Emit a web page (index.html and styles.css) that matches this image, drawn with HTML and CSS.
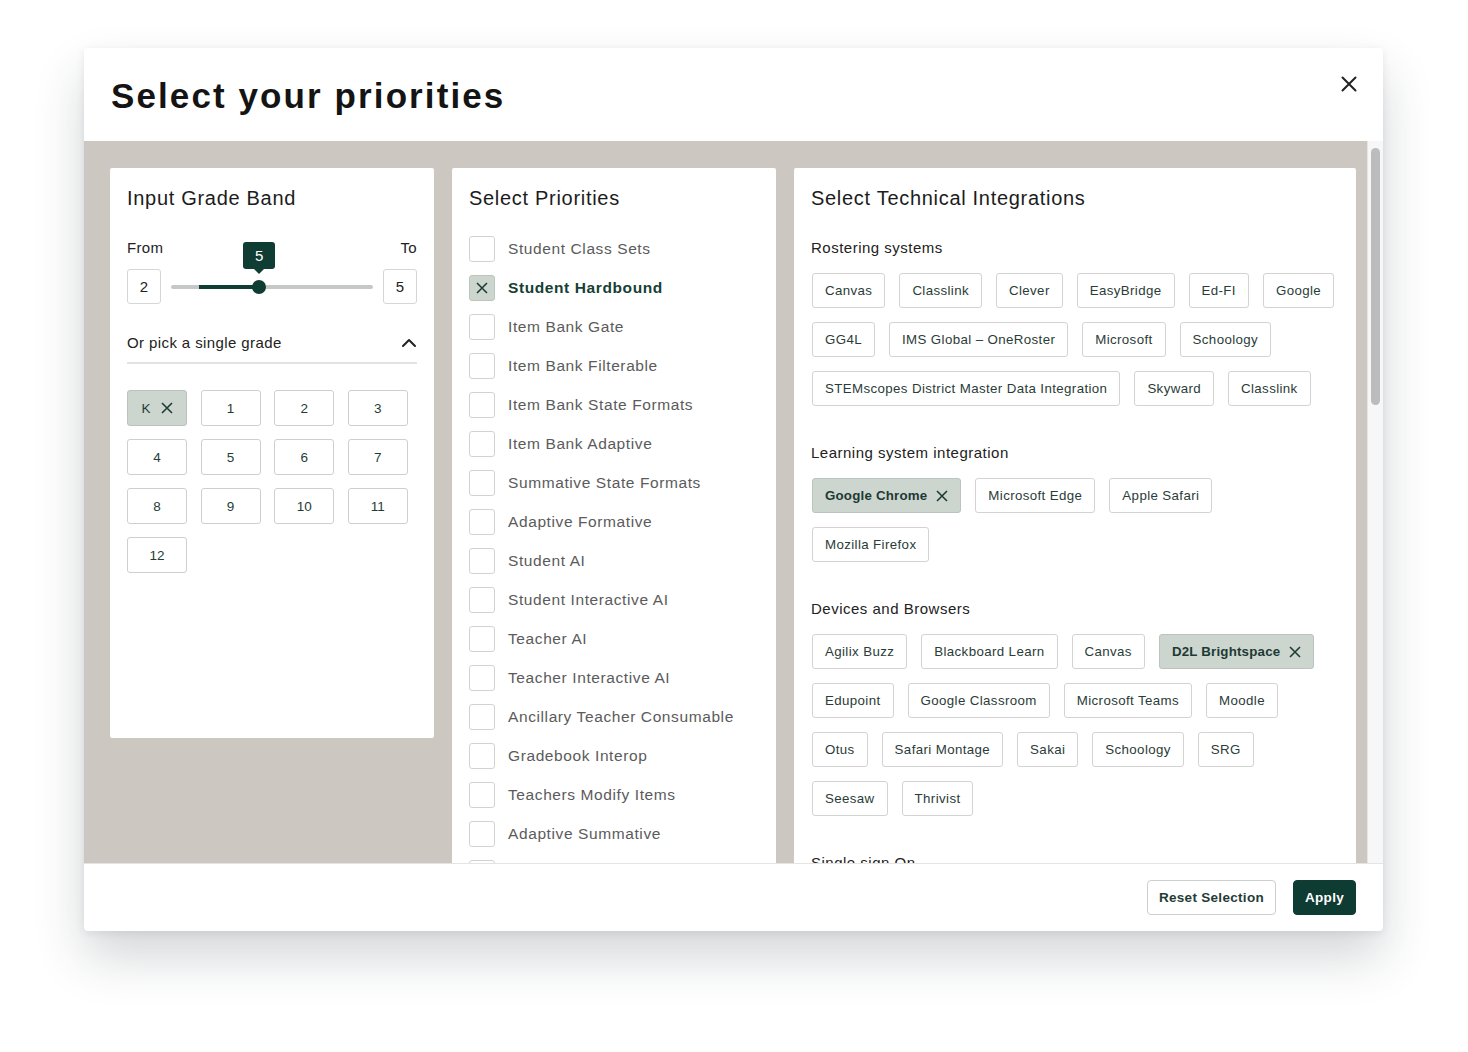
FILE: index.html
```html
<!DOCTYPE html>
<html lang="en">
<head>
<meta charset="utf-8">
<title>Select your priorities</title>
<link rel="stylesheet" href="styles.css">
</head>
<body>
<div class="modal">
  <header class="modal-header">
    <h1 class="title">Select your priorities</h1>
    <button class="close" aria-label="Close">
      <svg width="16" height="16" viewBox="0 0 16 16"><path d="M1.5 1.5 L14.5 14.5 M14.5 1.5 L1.5 14.5" stroke="#222" stroke-width="2" fill="none" stroke-linecap="round"/></svg>
    </button>
  </header>

  <div class="modal-body">
    <div class="panels">
      <section class="panel panel-grade">
        <h2 class="panel-title">Input Grade Band</h2>
        <div class="range-labels"><span>From</span><span>To</span></div>
        <div class="range-row">
          <div class="num-box">2</div>
          <div class="track">
            <div class="track-fill"></div>
            <div class="thumb"></div>
            <div class="bubble">5</div>
          </div>
          <div class="num-box">5</div>
        </div>
        <div class="single-head">
          <span>Or pick a single grade</span>
          <svg width="16" height="10" viewBox="0 0 16 10"><path d="M2 8 L8 2 L14 8" stroke="#222" stroke-width="2" fill="none" stroke-linecap="round" stroke-linejoin="round"/></svg>
        </div>
        <div class="grade-grid">
          <button class="grade selected">K <svg width="12" height="12" viewBox="0 0 12 12"><path d="M1 1 L11 11 M11 1 L1 11" stroke="#1f3d36" stroke-width="1.6" fill="none"/></svg></button>
          <button class="grade">1</button>
          <button class="grade">2</button>
          <button class="grade">3</button>
          <button class="grade">4</button>
          <button class="grade">5</button>
          <button class="grade">6</button>
          <button class="grade">7</button>
          <button class="grade">8</button>
          <button class="grade">9</button>
          <button class="grade">10</button>
          <button class="grade">11</button>
          <button class="grade">12</button>
        </div>
      </section>

      <section class="panel panel-prio">
        <h2 class="panel-title">Select Priorities</h2>
        <ul class="checklist">
          <li><span class="box"></span>Student Class Sets</li>
          <li class="checked"><span class="box"><svg width="12" height="12" viewBox="0 0 12 12"><path d="M1 1 L11 11 M11 1 L1 11" stroke="#1f3d36" stroke-width="1.6" fill="none"/></svg></span>Student Hardbound</li>
          <li><span class="box"></span>Item Bank Gate</li>
          <li><span class="box"></span>Item Bank Filterable</li>
          <li><span class="box"></span>Item Bank State Formats</li>
          <li><span class="box"></span>Item Bank Adaptive</li>
          <li><span class="box"></span>Summative State Formats</li>
          <li><span class="box"></span>Adaptive Formative</li>
          <li><span class="box"></span>Student AI</li>
          <li><span class="box"></span>Student Interactive AI</li>
          <li><span class="box"></span>Teacher AI</li>
          <li><span class="box"></span>Teacher Interactive AI</li>
          <li><span class="box"></span>Ancillary Teacher Consumable</li>
          <li><span class="box"></span>Gradebook Interop</li>
          <li><span class="box"></span>Teachers Modify Items</li>
          <li><span class="box"></span>Adaptive Summative</li>
          <li class="partial"><span class="box"></span></li>
        </ul>
      </section>

      <section class="panel panel-tech">
        <h2 class="panel-title">Select Technical Integrations</h2>

        <h3 class="group-title">Rostering systems</h3>
        <div class="chips">
          <span class="chip">Canvas</span>
          <span class="chip">Classlink</span>
          <span class="chip">Clever</span>
          <span class="chip">EasyBridge</span>
          <span class="chip">Ed-FI</span>
          <span class="chip">Google</span>
          <span class="chip">GG4L</span>
          <span class="chip">IMS Global – OneRoster</span>
          <span class="chip">Microsoft</span>
          <span class="chip">Schoology</span>
          <span class="chip">STEMscopes District Master Data Integration</span>
          <span class="chip">Skyward</span>
          <span class="chip">Classlink</span>
        </div>

        <h3 class="group-title">Learning system integration</h3>
        <div class="chips">
          <span class="chip selected">Google Chrome <svg width="12" height="12" viewBox="0 0 12 12"><path d="M1 1 L11 11 M11 1 L1 11" stroke="#1f3d36" stroke-width="1.6" fill="none"/></svg></span>
          <span class="chip">Microsoft Edge</span>
          <span class="chip">Apple Safari</span>
          <span class="chip">Mozilla Firefox</span>
        </div>

        <h3 class="group-title">Devices and Browsers</h3>
        <div class="chips">
          <span class="chip">Agilix Buzz</span>
          <span class="chip">Blackboard Learn</span>
          <span class="chip">Canvas</span>
          <span class="chip selected">D2L Brightspace <svg width="12" height="12" viewBox="0 0 12 12"><path d="M1 1 L11 11 M11 1 L1 11" stroke="#1f3d36" stroke-width="1.6" fill="none"/></svg></span>
          <span class="chip">Edupoint</span>
          <span class="chip">Google Classroom</span>
          <span class="chip">Microsoft Teams</span>
          <span class="chip">Moodle</span>
          <span class="chip">Otus</span>
          <span class="chip">Safari Montage</span>
          <span class="chip">Sakai</span>
          <span class="chip">Schoology</span>
          <span class="chip">SRG</span>
          <span class="chip">Seesaw</span>
          <span class="chip">Thrivist</span>
        </div>

        <h3 class="group-title">Single sign On</h3>
      </section>
    </div>
    <div class="scroll-track"><div class="scroll-thumb"></div></div>
  </div>

  <footer class="modal-footer">
    <button class="btn btn-outline">Reset Selection</button>
    <button class="btn btn-primary">Apply</button>
  </footer>
</div>
</body>
</html>
```

FILE: styles.css
```css
* { box-sizing: border-box; }

html, body {
  margin: 0;
  padding: 0;
  background: #ffffff;
}

body {
  font-family: "Liberation Sans", Arial, sans-serif;
  color: #222;
  padding: 48px 85px 121px 84px;
}

.modal {
  width: 1299px;
  height: 883px;
  background: #fff;
  border-radius: 4px;
  box-shadow: 0 26px 50px rgba(40, 50, 60, 0.20), 0 2px 8px rgba(0,0,0,0.08);
  display: flex;
  flex-direction: column;
  overflow: hidden;
}

.modal-header {
  height: 93px;
  flex: none;
  display: flex;
  justify-content: space-between;
  align-items: center;
  padding: 0 26px 0 27px;
}

.title {
  margin: 2px 0 0 0;
  font-size: 35px;
  font-weight: 700;
  letter-spacing: 2.1px;
  color: #141414;
}

.close {
  align-self: flex-start;
  margin-top: 28px;
  background: none;
  border: 0;
  padding: 0;
  width: 16px;
  height: 16px;
  cursor: pointer;
}

.modal-body {
  height: 722px;
  flex: none;
  background: #ccc7c1;
  display: flex;
  overflow: hidden;
}

.panels {
  flex: 1;
  display: flex;
  align-items: flex-start;
  gap: 18px;
  padding: 27px 11px 0 26px;
}

.scroll-track {
  width: 16px;
  flex: none;
  background: #f7f7f7;
  border-left: 1px solid #e6e6e6;
  padding: 7px 3px 0 3px;
}

.scroll-thumb {
  height: 257px;
  width: 9px;
  border-radius: 5px;
  background: #bcbcbc;
}

.panel {
  background: #fff;
  border-radius: 2px;
  padding: 18px 17px 0 17px;
}

.panel-grade { width: 324px; padding-bottom: 165px; }
.panel-prio { width: 324px; height: 760px; overflow: hidden; }
.panel-tech { width: 562px; height: 760px; overflow: hidden; padding-left: 18px; padding-right: 14px; }
.panel-tech .panel-title, .panel-tech .group-title { margin-left: -1px; }

.panel-title {
  margin: 0;
  font-size: 20px;
  line-height: 24px;
  font-weight: 400;
  letter-spacing: 0.7px;
  color: #1c1c1c;
}

/* grade band */
.range-labels {
  margin-top: 29px;
  display: flex;
  justify-content: space-between;
  font-size: 15px;
  line-height: 18px;
  letter-spacing: 0.3px;
  color: #222;
}

.range-row {
  margin-top: 12px;
  display: flex;
  align-items: center;
  gap: 10px;
}

.num-box {
  width: 34px;
  height: 35px;
  border: 1px solid #d6d6d6;
  border-radius: 3px;
  display: flex;
  align-items: center;
  justify-content: center;
  font-size: 15px;
  color: #222;
}

.track {
  flex: 1;
  height: 4px;
  background: #c4c8c6;
  border-radius: 2px;
  position: relative;
}

.track-fill {
  margin-left: 14%;
  width: 29.6%;
  height: 4px;
  background: #0f3d34;
}

.thumb {
  position: absolute;
  left: 43.6%;
  top: 50%;
  width: 14px;
  height: 14px;
  margin: -7px 0 0 -7px;
  border-radius: 50%;
  background: #0f3d34;
}

.bubble {
  position: absolute;
  left: 43.6%;
  bottom: 20px;
  transform: translateX(-50%);
  width: 32px;
  height: 27px;
  background: #0f3d34;
  color: #fff;
  border-radius: 3px;
  font-size: 15px;
  display: flex;
  align-items: center;
  justify-content: center;
}

.bubble::after {
  content: "";
  position: absolute;
  left: 50%;
  bottom: -5px;
  margin-left: -5px;
  border-left: 5px solid transparent;
  border-right: 5px solid transparent;
  border-top: 5px solid #0f3d34;
}

.single-head {
  margin-top: 29px;
  display: flex;
  justify-content: space-between;
  align-items: center;
  font-size: 15px;
  line-height: 20px;
  letter-spacing: 0.4px;
  padding-bottom: 9px;
  border-bottom: 2px solid #e2e2e2;
}

.grade-grid {
  margin-top: 26px;
  display: grid;
  grid-template-columns: repeat(4, 60px);
  column-gap: 13.6px;
  row-gap: 13px;
}

.grade {
  height: 36px;
  background: #fff;
  border: 1px solid #cfcfcf;
  border-radius: 3px;
  font-family: "Liberation Sans", Arial, sans-serif;
  font-size: 13.5px;
  color: #1f3d36;
  display: flex;
  align-items: center;
  justify-content: center;
  gap: 10px;
  padding: 0;
}

.grade.selected {
  background: #cdd5cf;
  border-color: #b9c2bc;
}

/* priorities */
.checklist {
  list-style: none;
  margin: 26px 0 0 0;
  padding: 0;
  display: flex;
  flex-direction: column;
  gap: 13px;
}

.checklist li {
  display: flex;
  align-items: center;
  gap: 13px;
  height: 26px;
  font-size: 15.5px;
  letter-spacing: 0.6px;
  color: #5b5b5b;
}

.box {
  width: 26px;
  height: 26px;
  flex: none;
  border: 1.5px solid #d2d2d2;
  border-radius: 3px;
  display: flex;
  align-items: center;
  justify-content: center;
}

.checklist li.checked { color: #163f36; font-weight: 700; }
.checklist li.checked .box { background: #cdd5cf; border-color: #bcc5bf; }

/* tech */
.group-title {
  margin: 38px 0 0 0;
  font-size: 15px;
  line-height: 18px;
  font-weight: 400;
  letter-spacing: 0.5px;
  color: #222;
}

.panel-title + .group-title { margin-top: 29px; }

.chips {
  margin-top: 16px;
  display: flex;
  flex-wrap: wrap;
  gap: 14px;
}

.chip {
  height: 35px;
  padding: 0 12px;
  border: 1px solid #d3d3d3;
  border-radius: 3px;
  display: inline-flex;
  align-items: center;
  gap: 9px;
  font-size: 13.3px;
  letter-spacing: 0.38px;
  color: #2a3c38;
  white-space: nowrap;
}

.chip.selected {
  background: #cdd5cf;
  border-color: #bac3bd;
  font-weight: 700;
  letter-spacing: 0.2px;
  color: #1d3a33;
}

/* footer */
.modal-footer {
  flex: 1;
  display: flex;
  justify-content: flex-end;
  align-items: center;
  gap: 17px;
  padding: 0 27px;
  border-top: 1px solid #e4e4e4;
}

.btn {
  height: 35px;
  border-radius: 4px;
  font-family: "Liberation Sans", Arial, sans-serif;
  font-size: 13.5px;
  font-weight: 700;
  letter-spacing: 0.3px;
  padding: 0 11px;
  cursor: pointer;
}

.btn-outline {
  background: #fff;
  border: 1px solid #cfcfcf;
  color: #1f3d36;
}

.btn-primary {
  background: #0e3b32;
  border: 1px solid #0e3b32;
  color: #fff;
}
```
